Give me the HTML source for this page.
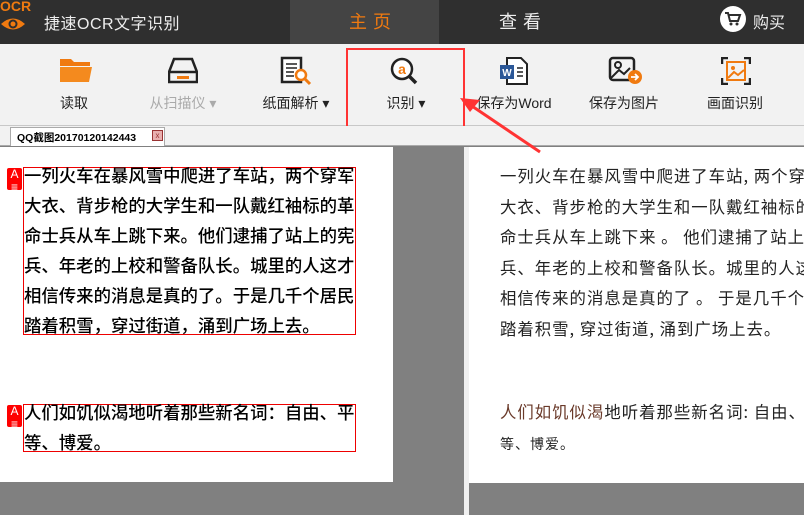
<!DOCTYPE html>
<html><head><meta charset="utf-8"><style>
*{margin:0;padding:0;box-sizing:border-box}
body{width:804px;height:515px;overflow:hidden;background:#808080;font-family:"Liberation Sans","Noto Sans CJK SC",sans-serif;position:relative}
.abs{position:absolute}
.top{left:0;top:0;width:804px;height:44px;background:#2f2f2f}
.tb{left:0;top:44px;width:804px;height:82px;background:#f2f2f2;border-bottom:1px solid #c8c8c8}
.lbl{position:absolute;top:93px;font-size:14px;color:#222;white-space:nowrap;transform:translateX(-50%)}
.strip{left:0;top:126px;width:804px;height:20px;background:#f2f2f2;border-bottom:1px solid #aaa}
.lt{font-family:"Noto Sans CJK SC",sans-serif;font-weight:500;font-size:17.4px;color:#000;line-height:30px;white-space:nowrap}
.rt{font-family:"Noto Sans CJK SC",sans-serif;font-size:16.4px;color:#222;line-height:30.5px;white-space:nowrap;letter-spacing:1px}
.box{border:1px solid #e00}
.aic{width:15px;height:22px;background:#f00;border-radius:2px;color:#fff;font-size:12px;text-align:center;line-height:13px}
</style></head><body>
<div class="abs top"></div>
<div class="abs" style="left:290px;top:0;width:149px;height:44px;background:#444"></div>
<div class="abs" style="left:0;top:-2px;color:#f07a10;font-size:14px;font-weight:bold">OCR</div>
<svg class="abs" style="left:0;top:16px" width="26" height="16"><path d="M1 8 Q13 -3 25 8 Q13 19 1 8Z" fill="#f07a10"/><circle cx="13" cy="8" r="4.5" fill="#2f2f2f"/><circle cx="13" cy="8" r="2.5" fill="#f07a10"/></svg>
<div class="abs" style="left:44px;top:10px;color:#eee;font-size:16px;letter-spacing:0.5px">捷速OCR文字识别</div>
<div class="abs" style="left:349px;top:8px;color:#f07a10;font-size:18px;letter-spacing:6px">主页</div>
<div class="abs" style="left:499px;top:8px;color:#eee;font-size:18px;letter-spacing:6px">查看</div>
<div class="abs" style="left:720px;top:6px;width:26px;height:26px;border-radius:13px;background:#fff"></div>
<svg class="abs" style="left:724px;top:11px" width="18" height="16"><path d="M1 2h3l2 8h8l2-6H5" stroke="#2f2f2f" stroke-width="2" fill="none"/><circle cx="7" cy="13" r="1.5" fill="#2f2f2f"/><circle cx="13" cy="13" r="1.5" fill="#2f2f2f"/></svg>
<div class="abs" style="left:753px;top:9px;color:#eee;font-size:16px">购买</div>

<div class="abs tb"></div>
<svg class="abs" style="left:59px;top:57px" width="34" height="28"><path d="M1 2h11l3 3h16v4H1z" fill="#f07a10"/><path d="M1 10h32l-3 15H1z" fill="#f48a1e"/></svg>
<svg class="abs" style="left:168px;top:57px" width="30" height="28"><path d="M6 2h18l5 13v10H1V15z" fill="none" stroke="#222" stroke-width="2.5"/><line x1="1" y1="15" x2="29" y2="15" stroke="#222" stroke-width="2.5"/><rect x="9" y="19" width="12" height="3" fill="#f07a10"/></svg>
<svg class="abs" style="left:280px;top:56px" width="32" height="30"><rect x="2" y="2" width="19" height="24" fill="#fff" stroke="#222" stroke-width="2.5"/><path d="M6 8h11M6 12h11M6 16h8M6 20h8" stroke="#222" stroke-width="1.5"/><circle cx="21" cy="19" r="5" fill="#fff" stroke="#f07a10" stroke-width="2.5"/><path d="M25 23l5 5" stroke="#f07a10" stroke-width="3"/></svg>
<svg class="abs" style="left:389px;top:56px" width="32" height="30"><circle cx="13" cy="13" r="10" fill="#fff" stroke="#222" stroke-width="2.5"/><path d="M20 20l7 7" stroke="#222" stroke-width="3.5"/><text x="13" y="18" font-size="14" font-weight="bold" fill="#f07a10" text-anchor="middle" font-family="Liberation Sans">a</text></svg>
<svg class="abs" style="left:500px;top:57px" width="30" height="28"><path d="M7 1h14l6 6v20H7z" fill="#fff" stroke="#222" stroke-width="2"/><path d="M17 11h6M17 15h6M17 19h6" stroke="#222" stroke-width="1.5"/><rect x="0" y="8" width="14" height="14" fill="#2b5797"/><text x="7" y="19" font-size="10" fill="#fff" text-anchor="middle" font-weight="bold" font-family="Liberation Sans">W</text></svg>
<svg class="abs" style="left:608px;top:56px" width="36" height="30"><rect x="2" y="2" width="24" height="22" rx="3" fill="none" stroke="#222" stroke-width="2.5"/><circle cx="10" cy="9" r="3" fill="none" stroke="#222" stroke-width="2"/><path d="M3 22l8-8 5 4 6-6" fill="none" stroke="#222" stroke-width="2"/><circle cx="27" cy="21" r="7" fill="#f07a10"/><path d="M23 21h7M27 18l3 3-3 3" stroke="#fff" stroke-width="1.8" fill="none"/></svg>
<svg class="abs" style="left:721px;top:57px" width="30" height="28"><path d="M1 7V1h6M23 1h6v6M29 21v6h-6M7 27H1v-6" stroke="#222" stroke-width="2.5" fill="none"/><rect x="6" y="5" width="18" height="18" fill="none" stroke="#f07a10" stroke-width="2"/><circle cx="12" cy="11" r="2" fill="#f07a10"/><path d="M7 21l6-6 4 3 6-5" stroke="#f07a10" stroke-width="2" fill="none"/></svg>
<div class="lbl" style="left:74px">读取</div>
<div class="lbl" style="left:183px;color:#aaa">从扫描仪 ▾</div>
<div class="lbl" style="left:296px">纸面解析 ▾</div>
<div class="lbl" style="left:406px">识别 ▾</div>
<div class="lbl" style="left:514px">保存为Word</div>
<div class="lbl" style="left:624px">保存为图片</div>
<div class="lbl" style="left:735px">画面识别</div>
<div class="abs" style="left:346px;top:48px;width:119px;height:80px;border:2px solid #f33"></div>

<div class="abs strip"></div>
<div class="abs" style="left:10px;top:127px;width:155px;height:19px;background:#fff;border:1px solid #aaa;border-bottom:none;font-size:10.5px;font-weight:bold;padding:2px 0 0 6px">QQ截图20170120142443</div>
<div class="abs" style="left:152px;top:130px;width:11px;height:11px;background:#e8b0b0;border:1px solid #933;font-size:8px;line-height:9px;text-align:center;color:#933">x</div>

<div class="abs" style="left:0;top:147px;width:393px;height:335px;background:#fff"></div>
<div class="abs" style="left:464px;top:147px;width:5px;height:368px;background:#f0f0f0"></div>
<div class="abs" style="left:469px;top:147px;width:335px;height:336px;background:#fff"></div>
<svg class="abs" style="left:455px;top:92px" width="100" height="70"><path d="M8 8L85 60" stroke="#f33" stroke-width="3"/><path d="M5 6l20 2-10 12z" fill="#f33"/></svg>

<div class="abs aic" style="left:7px;top:168px">A<br>≡</div>
<div class="abs box" style="left:23px;top:167px;width:333px;height:168px"></div>
<div class="abs lt" style="left:24px;top:161px">一列火车在暴风雪中爬进了车站，两个穿军<br>大衣、背步枪的大学生和一队戴红袖标的革<br>命士兵从车上跳下来。他们逮捕了站上的宪<br>兵、年老的上校和警备队长。城里的人这才<br>相信传来的消息是真的了。于是几千个居民<br>踏着积雪，穿过街道，涌到广场上去。</div>
<div class="abs aic" style="left:7px;top:405px">A<br>≡</div>
<div class="abs box" style="left:23px;top:404px;width:333px;height:48px"></div>
<div class="abs lt" style="left:24px;top:398px">人们如饥似渴地听着那些新名词：自由、平<br>等、博爱。</div>

<div class="abs rt" style="left:500px;top:160px">一列火车在暴风雪中爬进了车站, 两个穿<br>大衣、背步枪的大学生和一队戴红袖标的<br>命士兵从车上跳下来 。 他们逮捕了站上的<br>兵、年老的上校和警备队长。城里的人这<br>相信传来的消息是真的了 。 于是几千个<br>踏着积雪, 穿过街道, 涌到广场上去。</div>
<div class="abs rt" style="left:500px;top:396px"><span style="color:#6a3a2a">人们如饥似渴</span>地听着那些新名词: 自由、<br><span style="font-size:14px">等、博爱。</span></div>
</body></html>
